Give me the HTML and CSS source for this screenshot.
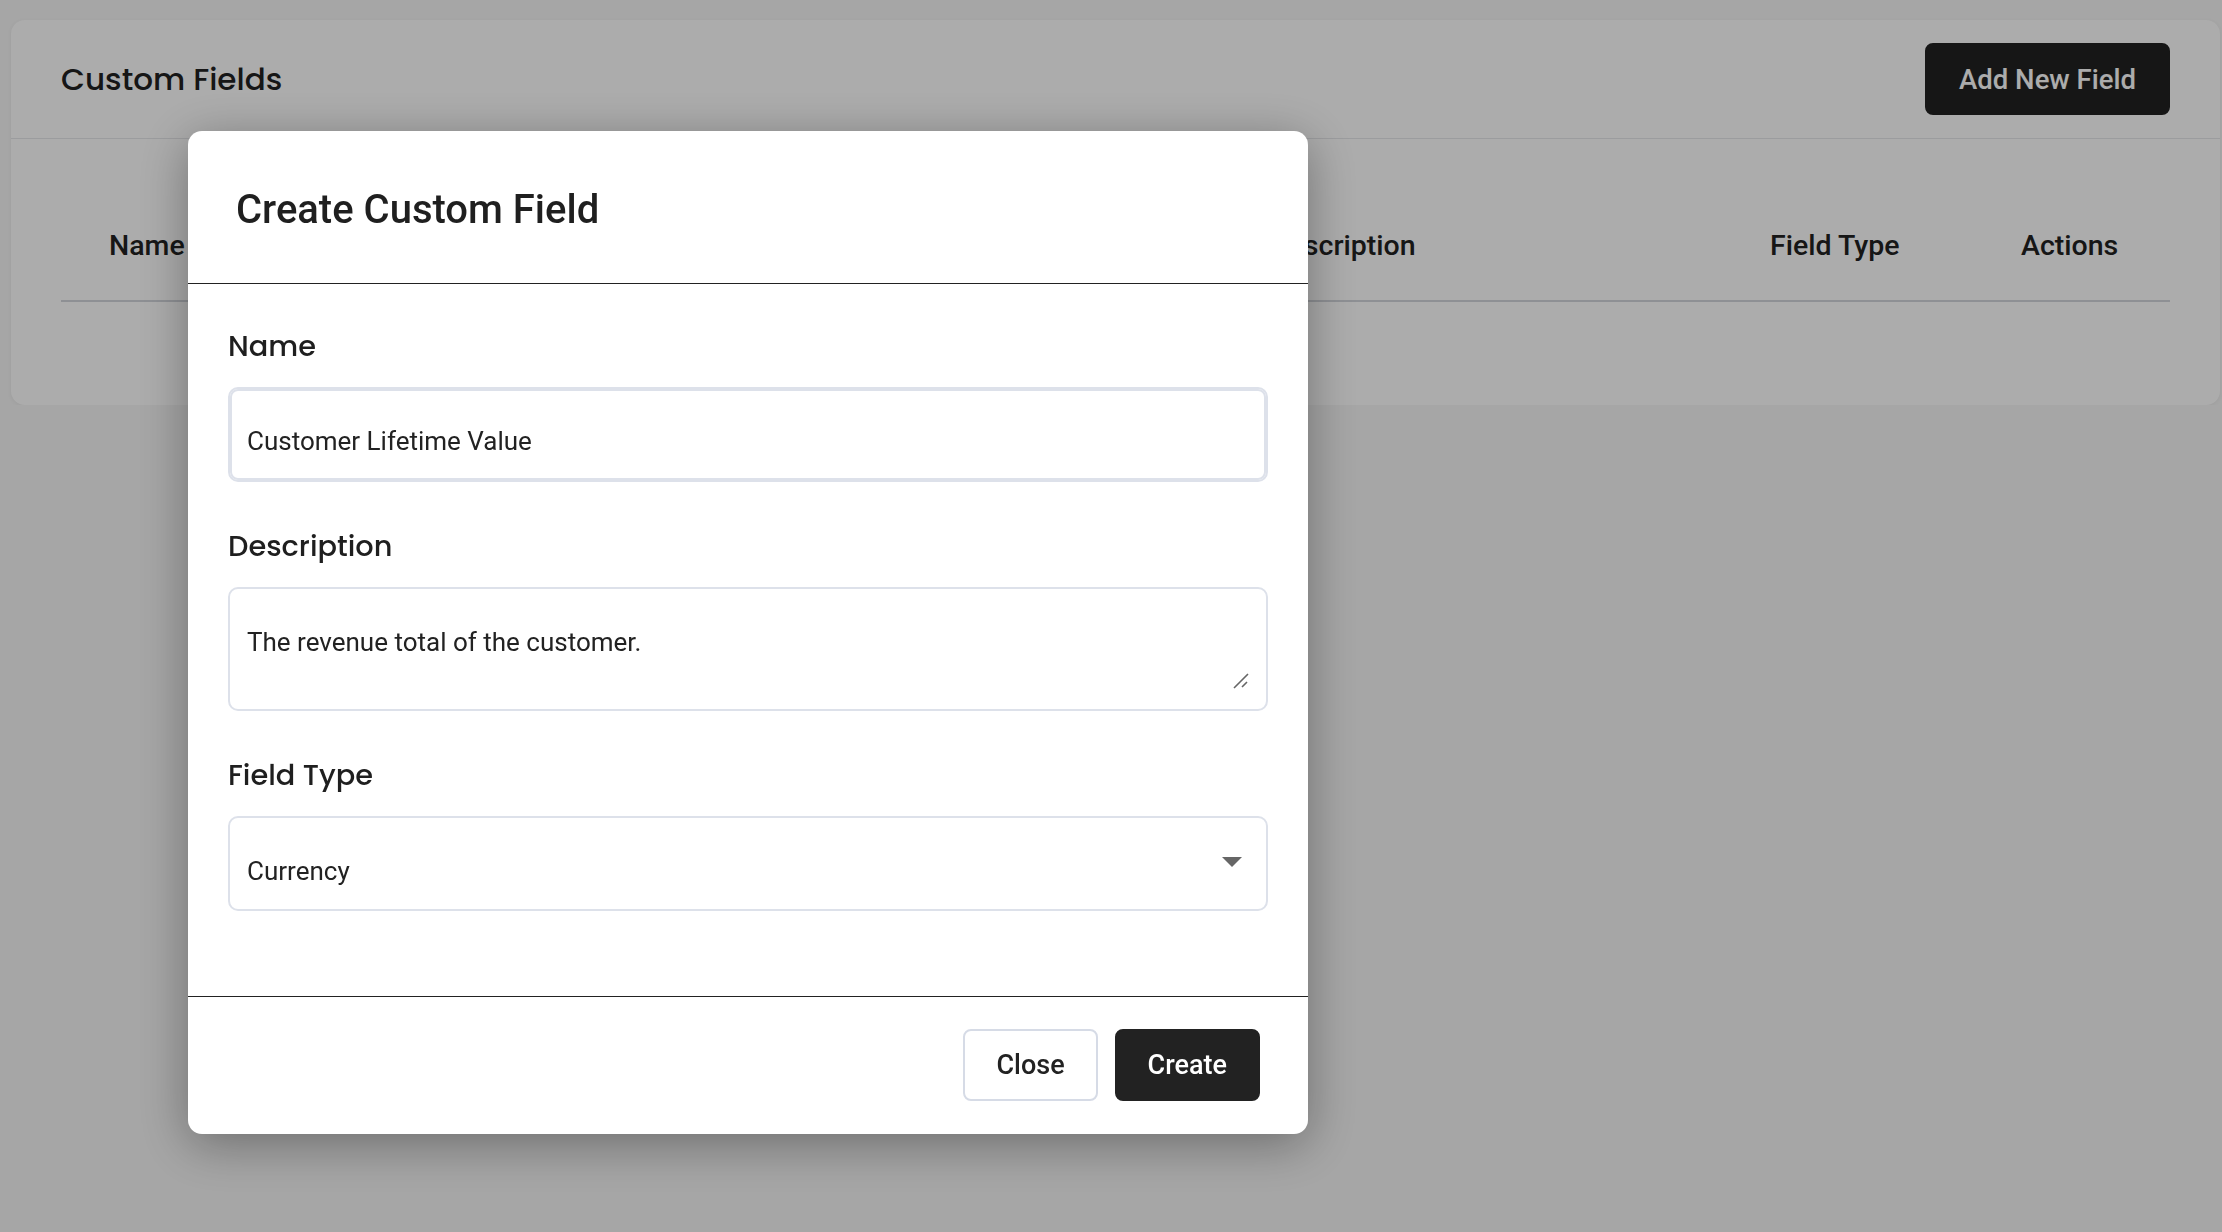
FILE: index.html
```html
<!DOCTYPE html>
<html>
<head>
	<meta charset="utf-8">
	<title>Custom Fields</title>
	<link rel="stylesheet" href="styles.css">
</head>
<body>
	<div class="page">
		<div class="card">
			<div class="card-head">
				<h2 class="card-title">Custom Fields</h2>
				<button class="btn btn-dark btn-add">Add New Field</button>
			</div>
			<div class="table-wrap">
				<table class="fields-table">
					<colgroup>
						<col class="col-name">
						<col class="col-desc">
						<col class="col-type">
						<col class="col-actions">
					</colgroup>
					<thead>
						<tr>
							<th>Name</th>
							<th>Description</th>
							<th>Field Type</th>
							<th>Actions</th>
						</tr>
					</thead>
					<tbody></tbody>
				</table>
			</div>
		</div>
	</div>

	<div class="overlay">
		<div class="modal">
			<div class="modal-head">
				<h3 class="modal-title">Create Custom Field</h3>
			</div>
			<div class="modal-body">
				<div class="form-group">
					<label class="form-label">Name</label>
					<input class="form-control focused" type="text" value="Customer Lifetime Value">
				</div>
				<div class="form-group">
					<label class="form-label">Description</label>
					<div class="control-wrap">
						<textarea class="form-control area">The revenue total of the customer.</textarea>
						<svg class="grip" width="16" height="16" viewBox="0 0 16 16">
							<path d="M15 1 L1 15 M14 9 L9 14" stroke="#666" stroke-width="1.6" fill="none"/>
						</svg>
					</div>
				</div>
				<div class="form-group last">
					<label class="form-label">Field Type</label>
					<div class="control-wrap">
						<select class="form-control select">
							<option>Currency</option>
							<option>Text</option>
							<option>Number</option>
							<option>Date</option>
						</select>
						<svg class="caret" width="20" height="10" viewBox="0 0 20 10">
							<path d="M0 0 L20 0 L10 10 Z" fill="#666"/>
						</svg>
					</div>
				</div>
			</div>
			<div class="modal-foot">
				<button class="btn btn-light">Close</button>
				<button class="btn btn-dark">Create</button>
			</div>
		</div>
	</div>
</body>
</html>
```

FILE: styles.css
```css
* {
	box-sizing: border-box;
}
body {
	margin: 0;
	background: #f6f6f6;
	font-family: Roboto, "Liberation Sans", sans-serif;
	color: #222;
}
.page {
	padding: 20px 2px 0 11px;
}

/* card with the table */
.card {
	background: #fff;
	border-radius: 14px;
	box-shadow: 0 1px 4px rgba(0,0,0,0.06);
}
.card-head {
	display: flex;
	align-items: center;
	justify-content: space-between;
	height: 119px;
	padding: 0 50px;
	border-bottom: 1px solid #e6e7ea;
}
.card-title {
	margin: 0;
	font-family: "Poppins", "Open Sans", sans-serif;
	font-weight: 500;
	font-size: 31px;
	color: #222;
}
.table-wrap {
	padding: 52px 50px 103px;
}
.fields-table {
	width: 100%;
	table-layout: fixed;
	border-collapse: collapse;
}
.col-name { width: 1161px; }
.col-desc { width: 500px; }
.col-type { width: 251px; }
.col-actions { width: 197px; }
.fields-table th {
	text-align: left;
	font-weight: 500;
	font-size: 28.5px;
	line-height: 30px;
	padding: 40px 48px 39px;
	border-bottom: 2px solid #d3d6dc;
	white-space: nowrap;
}

/* buttons */
.btn {
	font-family: Roboto, "Liberation Sans", sans-serif;
	font-weight: 500;
	font-size: 27px;
	height: 72px;
	padding: 0 31px;
	border-radius: 8px;
	border: 2px solid #222;
	cursor: pointer;
}
.btn-dark {
	background: #222;
	color: #fff;
}
.btn-light {
	background: #fff;
	color: #222;
	border-color: #d6dbe6;
}
.btn-add {
	padding: 0 32px;
	font-size: 27.5px;
}

/* modal */
.overlay {
	position: fixed;
	top: 0;
	left: 0;
	right: 0;
	bottom: 0;
	background: rgba(0,0,0,0.325);
	padding: 131px 0 0 188px;
}
.modal {
	width: 1120px;
	background: #fff;
	border-radius: 14px;
	box-shadow: 0 10px 50px rgba(0,0,0,0.35);
	overflow: hidden;
}
.modal-head {
	display: flex;
	align-items: center;
	height: 153px;
	padding: 6px 48px 0;
	border-bottom: 1px solid #222;
}
.modal-title {
	margin: 0;
	font-weight: 500;
	font-size: 40px;
	line-height: 46px;
	color: #1f1f1f;
}
.modal-body {
	padding: 42px 40px 40px;
}
.form-group {
	margin-bottom: 44px;
}
.form-group.last {
	margin-bottom: 45px;
}
.form-label {
	display: block;
	font-family: "Poppins", "Open Sans", sans-serif;
	font-weight: 500;
	font-size: 28.8px;
	line-height: 40px;
	margin-bottom: 21px;
	color: #1f1f1f;
}
.form-control {
	display: block;
	width: 100%;
	height: 95px;
	font-family: Roboto, "Liberation Sans", sans-serif;
	font-size: 26px;
	line-height: 30px;
	color: #222;
	background: #fff;
	border: 2px solid #dde1ea;
	border-radius: 10px;
	padding: 37px 17px 22px;
	outline: none;
}
.form-control.focused {
	box-shadow: inset 0 0 0 2px #dde1ea;
	padding: 36px 17px 23px;
}
.control-wrap {
	position: relative;
}
.area {
	height: 124px;
	padding: 38px 17px 10px;
	resize: none;
}
.grip {
	position: absolute;
	right: 19px;
	bottom: 22px;
}
.select {
	height: 95px;
	-webkit-appearance: none;
	appearance: none;
	padding: 38px 17px 23px;
}
.caret {
	position: absolute;
	right: 26px;
	top: 41px;
}
.modal-foot {
	display: flex;
	justify-content: flex-end;
	gap: 17px;
	padding: 32px 48px 33px;
	border-top: 1px solid #222;
}
```
